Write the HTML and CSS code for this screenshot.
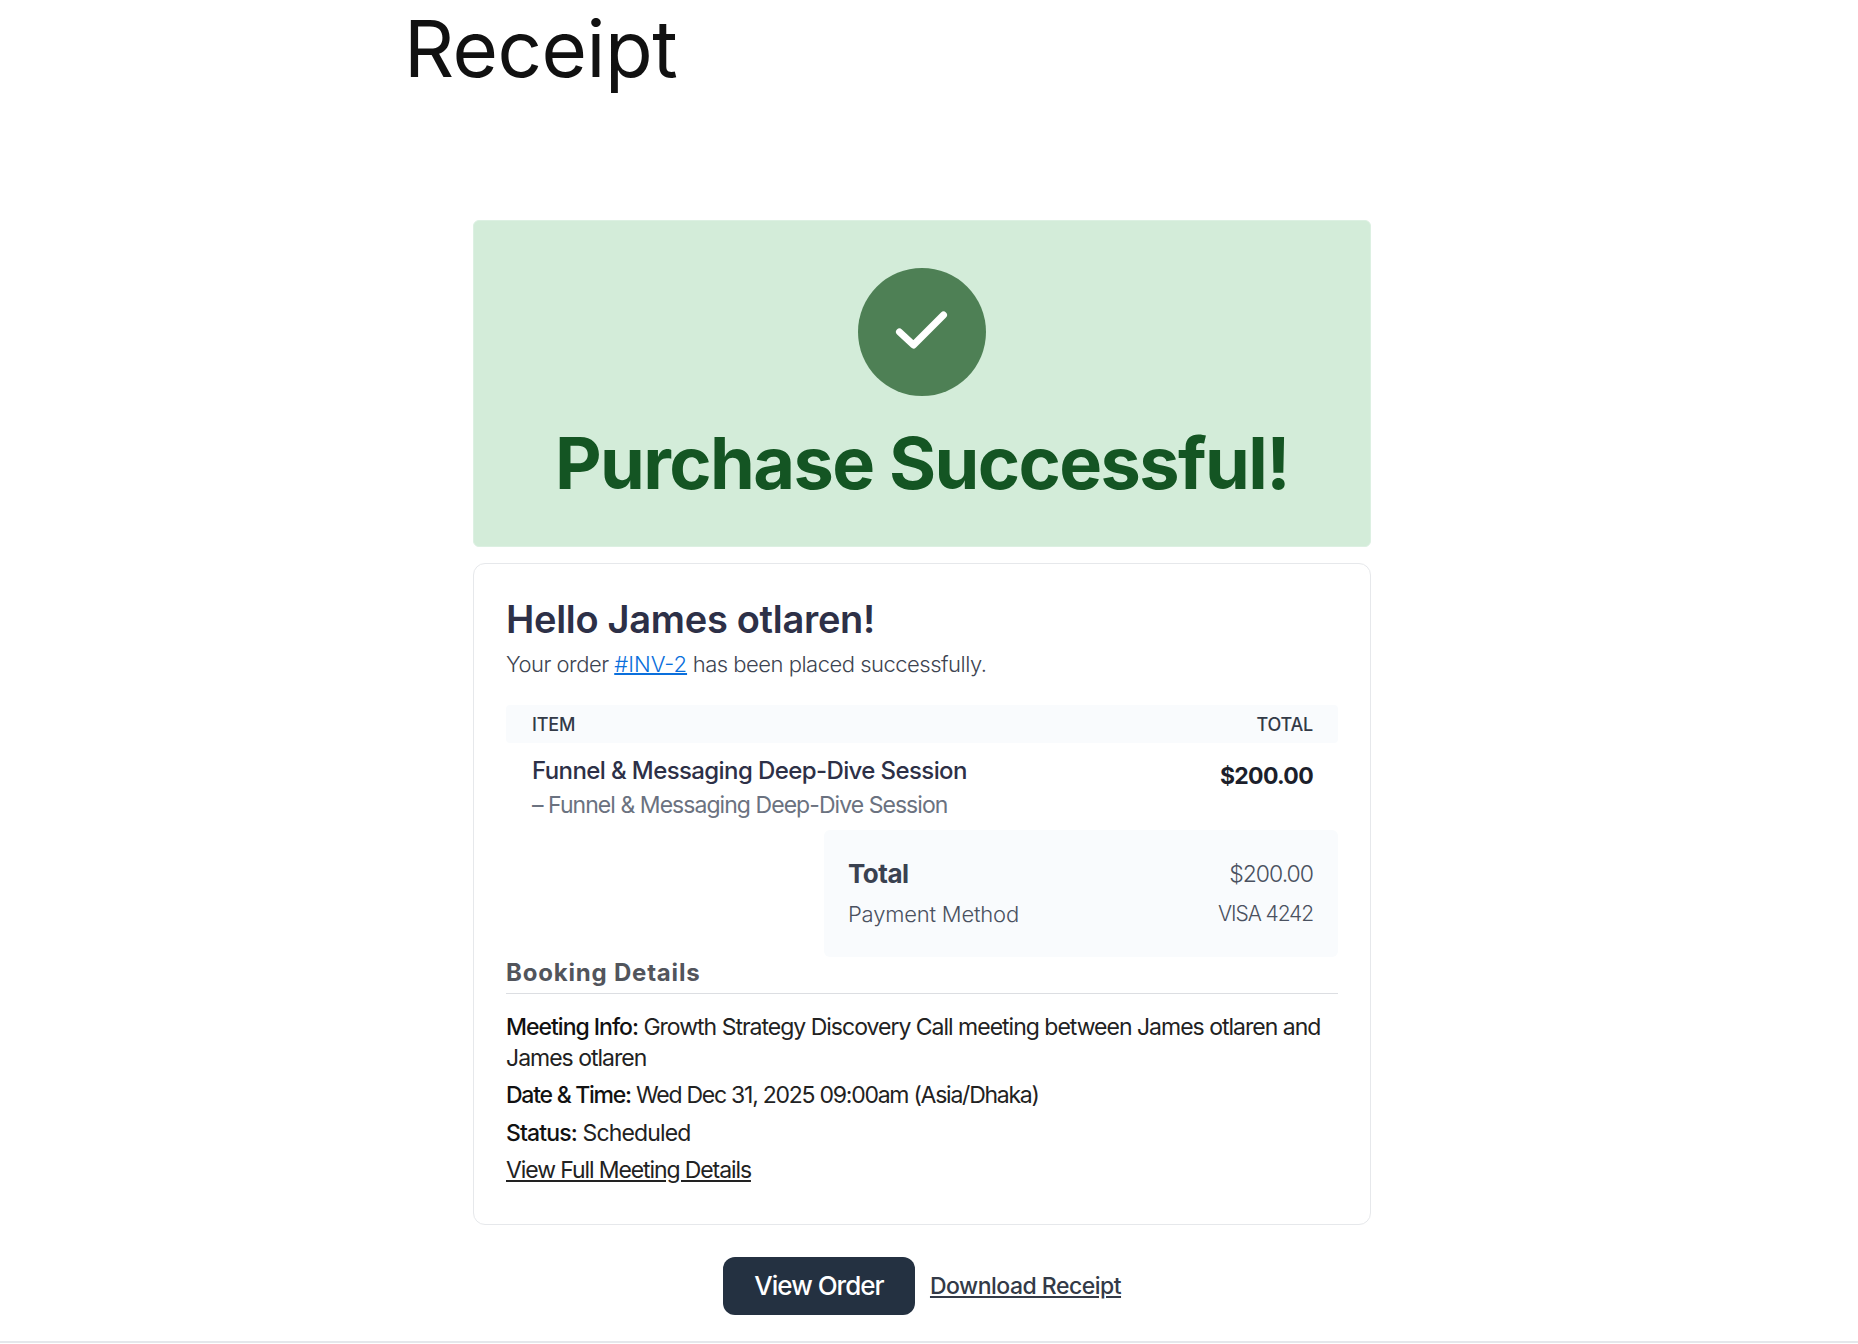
FILE: index.html
```html
<!DOCTYPE html>
<html lang="en">
<head>
    <meta charset="UTF-8">
    <meta name="viewport" content="width=device-width, initial-scale=1.0">
    <title>Receipt</title>
    <link rel="stylesheet" href="styles.css">
</head>
<body>
    <header class="page-header">
        <h1>Receipt</h1>
    </header>
    <main class="receipt">
        <section class="banner">
            <div class="check-circle">
                <svg width="64" height="64" viewBox="0 0 64 64" fill="none" stroke="#fff" stroke-width="7" stroke-linecap="round" stroke-linejoin="round">
                    <path d="M9.5 32 L23.5 45 L53.5 15"></path>
                </svg>
            </div>
            <h2>Purchase Successful!</h2>
        </section>
        <section class="card">
            <h3 class="hello">Hello James otlaren!</h3>
            <p class="order-line">Your order <a href="#">#INV-2</a> has been placed successfully.</p>
            <div class="table-head">
                <span>ITEM</span>
                <span>TOTAL</span>
            </div>
            <div class="item-row">
                <div>
                    <div class="item-name">Funnel &amp; Messaging Deep-Dive Session</div>
                    <div class="item-sub">&ndash; Funnel &amp; Messaging Deep-Dive Session</div>
                </div>
                <div class="item-price">$200.00</div>
            </div>
            <div class="totals">
                <div class="totals-row total-main">
                    <strong>Total</strong>
                    <span>$200.00</span>
                </div>
                <div class="totals-row">
                    <span>Payment Method</span>
                    <span class="pay-value">VISA 4242</span>
                </div>
            </div>
            <h4 class="booking-title">Booking Details</h4>
            <p class="booking-line wrap-line"><b>Meeting Info:</b> Growth Strategy Discovery Call meeting between James otlaren and James otlaren</p>
            <p class="booking-line date-line"><b>Date &amp; Time:</b> Wed Dec 31, 2025 09:00am (Asia/Dhaka)</p>
            <p class="booking-line status-line"><b>Status:</b> Scheduled</p>
            <p class="booking-line"><a href="#">View Full Meeting Details</a></p>
        </section>
        <div class="actions">
            <a class="btn-order" href="#">View Order</a>
            <a class="link-download" href="#">Download Receipt</a>
        </div>
    </main>
    <footer class="page-footer"></footer>
</body>
</html>
```

FILE: styles.css
```css
* {
    box-sizing: border-box;
}
html, body {
    margin: 0;
    padding: 0;
}
body {
    font-family: Inter, "Noto Sans", sans-serif;
    background-color: #fff;
    color: #111;
    height: 1344px;
    overflow: hidden;
    padding-right: 14px;
}
.page-header {
    padding-left: 404px;
    height: 220px;
}
.page-header h1 {
    margin: 0;
    font-size: 78px;
    font-weight: 400;
    line-height: 98px;
    letter-spacing: -0.5px;
    color: #111;
}
.receipt {
    width: 898px;
    margin: 0 auto;
}
.banner {
    height: 327px;
    background-color: #d3ecd9;
    border: 1px solid #dcf0e2;
    border-radius: 6px;
    padding-top: 47px;
    text-align: center;
}
.check-circle {
    width: 128px;
    height: 128px;
    margin: 0 auto;
    border-radius: 50%;
    background-color: #4e8055;
    display: flex;
    align-items: center;
    justify-content: center;
}
.banner h2 {
    margin: 23px 0 0;
    font-size: 72px;
    line-height: 88px;
    font-weight: 700;
    letter-spacing: -1.6px;
    color: #145523;
}
.card {
    margin-top: 16px;
    height: 662px;
    border: 1px solid #e6e8eb;
    border-radius: 12px;
    padding: 30px 32px 0;
}
.hello {
    margin: 0;
    font-size: 38px;
    line-height: 50px;
    font-weight: 600;
    letter-spacing: -0.3px;
    color: #2d3047;
}
.order-line {
    margin: 3px 0 0;
    font-size: 22px;
    line-height: 34px;
    font-weight: 300;
    letter-spacing: -0.5px;
    color: #3d4451;
}
.order-line a {
    color: #0a6fdc;
    letter-spacing: 0;
    text-decoration-thickness: 2px;
}
.table-head {
    margin-top: 24px;
    height: 38px;
    padding: 0 25px 0 26px;
    display: flex;
    align-items: center;
    justify-content: space-between;
    background-color: #f9fbfd;
    border-radius: 4px;
    font-size: 18px;
    font-weight: 500;
    letter-spacing: -0.2px;
    color: #333a47;
}
.item-row {
    padding: 10px 25px 0 26px;
    height: 87px;
    display: flex;
    justify-content: space-between;
}
.item-name {
    font-size: 24px;
    line-height: 35px;
    font-weight: 500;
    letter-spacing: -0.6px;
    color: #2d3047;
}
.item-sub {
    font-size: 23px;
    line-height: 34px;
    font-weight: 400;
    letter-spacing: -0.95px;
    color: #6b7280;
}
.item-price {
    margin-top: 5px;
    font-size: 23px;
    line-height: 36px;
    font-weight: 700;
    letter-spacing: -0.7px;
    color: #1c1f2b;
}
.totals {
    margin-left: 318px;
    height: 127px;
    padding: 24px 25px 0 24px;
    background-color: #f9fbfd;
    border-radius: 6px;
    color: #4a5160;
}
.totals-row {
    display: flex;
    justify-content: space-between;
    align-items: center;
    font-size: 22px;
    line-height: 40px;
    font-weight: 300;
    letter-spacing: -0.2px;
}
.totals-row strong {
    font-size: 26px;
    font-weight: 700;
    letter-spacing: -0.5px;
    color: #3a4150;
}
.total-main span {
    font-size: 23px;
    letter-spacing: -1px;
}
.pay-value {
    font-size: 21px;
    letter-spacing: -1.1px;
}
.booking-title {
    margin: 1px 0 0;
    padding-bottom: 5px;
    border-bottom: 1px solid #dcdee2;
    font-size: 24px;
    line-height: 30px;
    font-weight: 700;
    letter-spacing: 0.8px;
    color: #52555c;
}
.booking-line {
    margin: 0;
    font-size: 23px;
    line-height: 37.6px;
    font-weight: 400;
    letter-spacing: -1.1px;
    color: #222;
}
.wrap-line {
    margin-top: 18px;
    line-height: 31px;
    margin-bottom: 3px;
    letter-spacing: -1px;
}
.date-line {
    letter-spacing: -1.25px;
}
.status-line {
    letter-spacing: -0.85px;
}
.booking-line b {
    font-weight: 500;
    color: #111;
}
.booking-line a {
    color: #222;
}
.actions {
    margin-top: 32px;
    display: flex;
    justify-content: center;
    align-items: center;
    gap: 15px;
}
.btn-order {
    display: block;
    width: 192px;
    height: 58px;
    line-height: 58px;
    text-align: center;
    background-color: #243141;
    border-radius: 12px;
    color: #fff;
    text-decoration: none;
    font-size: 26px;
    font-weight: 500;
    letter-spacing: -1px;
}
.link-download {
    font-size: 23px;
    font-weight: 500;
    letter-spacing: -0.5px;
    color: #333a47;
}
.page-footer {
    position: absolute;
    left: 0;
    right: 0;
    top: 1341px;
    border-top: 2px solid #e5e7eb;
}
```
